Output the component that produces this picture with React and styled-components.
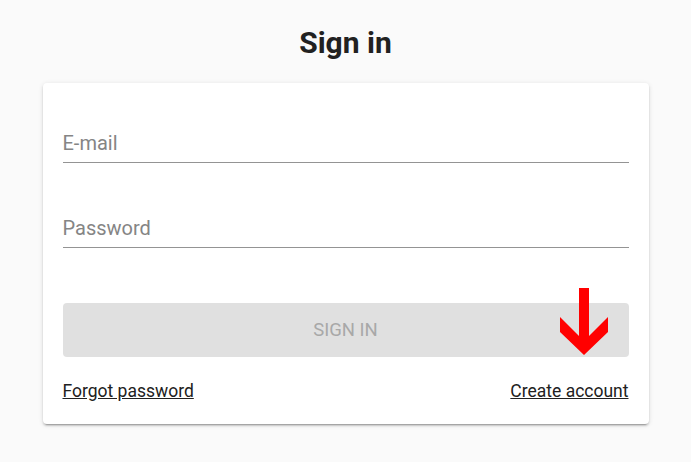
import React from "react";
import styled, { createGlobalStyle } from "styled-components";

const Global = createGlobalStyle`
  html, body { margin: 0; padding: 0; background: #fafafa; }
  body { font-family: Roboto, "Noto Sans", Arial, sans-serif; color: #212121; }
  * { box-sizing: border-box; }
`;

const Page = styled.div`
  width: 691px;
  height: 462px;
  display: flex;
  flex-direction: column;
  align-items: center;
  padding-top: 23px;
`;

const Title = styled.h1`
  margin: 0;
  height: 40px;
  line-height: 40px;
  font-size: 30px;
  font-weight: 700;
  color: #212121;
`;

const Card = styled.div`
  position: relative;
  margin-top: 20px;
  width: 606px;
  background: #fff;
  border-radius: 4px;
  box-shadow: 0 3px 1px -2px rgba(0,0,0,0.2), 0 2px 2px 0 rgba(0,0,0,0.14), 0 1px 5px 0 rgba(0,0,0,0.12);
  padding: 20px 20px 23px;
  display: flex;
  flex-direction: column;
`;

const Field = styled.div`
  padding-top: 28px;
  margin-top: ${(p) => (p.$first ? 0 : 25)}px;
`;

const Input = styled.input`
  display: block;
  width: 100%;
  height: 32px;
  border: none;
  border-bottom: 1px solid #949494;
  outline: none;
  background: transparent;
  padding: 1px 0 8px;
  font-family: Roboto, Arial, sans-serif;
  font-size: 20px;
  line-height: 22px;
  color: #212121;
  &::placeholder { color: #858585; opacity: 1; }
`;

const Button = styled.button`
  margin-top: 55px;
  height: 54px;
  width: 100%;
  border: none;
  border-radius: 4px;
  background: #e0e0e0;
  color: #a8a8a8;
  font-family: Roboto, Arial, sans-serif;
  font-size: 18.5px;
  font-weight: 400;
  text-transform: uppercase;
`;

const Links = styled.div`
  margin-top: 24px;
  height: 20px;
  display: flex;
  justify-content: space-between;
  align-items: center;
`;

const Link = styled.a`
  font-size: 17.5px;
  line-height: 20px;
  color: #212121;
  text-decoration: underline;
  cursor: pointer;
`;

const Arrow = styled.svg`
  position: absolute;
  left: 515px;
  top: 203px;
  width: 52px;
  height: 72px;
`;

export default function App() {
  return (
    <>
      <Global />
      <Page>
        <Title>Sign in</Title>
        <Card>
          <Field $first>
            <Input type="email" placeholder="E-mail" />
          </Field>
          <Field>
            <Input type="password" placeholder="Password" />
          </Field>
          <Button disabled>Sign in</Button>
          <Links>
            <Link>Forgot password</Link>
            <Link>Create account</Link>
          </Links>
          <Arrow viewBox="558 286 52 72">
            <rect x="579" y="288" width="10" height="55" fill="#ff0000" />
            <polygon points="560,317 584,341 608,317 608,332 584,355 560,332" fill="#ff0000" />
          </Arrow>
        </Card>
      </Page>
    </>
  );
}
